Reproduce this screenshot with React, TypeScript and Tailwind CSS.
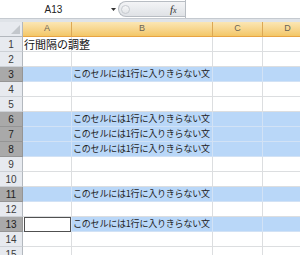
import React from "react";

const SEL = new Set([3, 6, 7, 8, 11, 13]);
const TXT = "このセルには1行に入りきらない文";

function ColHead({ w, label, last }: { w: string; label: string; last?: boolean }) {
  return (
    <div
      className={`${w} shrink-0 h-full flex items-center justify-center border-b border-[#e8a443] ${
        last ? "" : "border-r border-r-[#dca855]"
      } bg-gradient-to-b from-[#fbe6b4] to-[#f3c767] text-[9px] text-[#6a6456]`}
      style={{ fontFamily: '"Liberation Sans", Arial, sans-serif' }}
    >
      {label}
    </div>
  );
}

function Row({ n }: { n: number }) {
  const sel = SEL.has(n);
  const active = n === 13;
  const cellBase = sel
    ? "bg-[#b9d7f8] border-r border-b border-[#d2e2f5]"
    : "bg-white border-r border-b border-[#dcdee0]";
  return (
    <div className="flex h-[15px] shrink-0">
      <div
        className={`w-[23px] shrink-0 h-full flex items-center justify-center text-[10px] border-r border-b ${
          sel
            ? "bg-[#a9a9a9] border-[#959595] text-[#222]"
            : "bg-[#e7eaef] border-r-[#b3b8be] border-b-[#cdd1d6] text-[#3c3c3c]"
        }`}
        style={{ fontFamily: '"Liberation Sans", Arial, sans-serif' }}
      >
        {n}
      </div>
      <div className={`w-[49px] shrink-0 h-full relative ${active ? "bg-white border-r border-b border-[#d2e2f5]" : cellBase}`}>
        {active && (
          <div className="absolute left-[1px] top-[0px] right-0 bottom-[-1px] border-[1.5px] border-[#505050]" />
        )}
        {n === 1 && (
          <div
            className="absolute left-[1px] top-0 h-full flex items-center whitespace-nowrap text-[11px] text-[#111] z-10"
            style={{ fontFamily: '"Noto Sans CJK JP", sans-serif' }}
          >
            行間隔の調整
          </div>
        )}
      </div>
      <div className={`w-[141px] shrink-0 h-full flex items-center ${cellBase}`}>
        {sel && (
          <span
            className="pl-[1px] whitespace-nowrap text-[9px] tracking-[-0.2px] text-[#222]"
            style={{ fontFamily: '"Noto Sans CJK JP", sans-serif' }}
          >
            {TXT}
          </span>
        )}
      </div>
      <div className={`w-[50px] shrink-0 h-full ${cellBase}`} />
      <div className={`w-[49px] shrink-0 h-full ${cellBase}`} />
    </div>
  );
}

export default function App() {
  const rows = Array.from({ length: 15 }, (_, i) => i + 1);
  return (
    <div className="w-[300px] h-[255px] overflow-hidden bg-white flex flex-col">
      {/* formula bar */}
      <div className="flex h-[19px] shrink-0 border-b border-[#c5cad0] bg-white">
        <div className="w-[118px] shrink-0 h-full flex items-center relative">
          <div
            className="w-[107px] text-center text-[10px] text-[#222]"
            style={{ fontFamily: '"Liberation Sans", Arial, sans-serif' }}
          >
            A13
          </div>
          <svg className="absolute left-[111px] top-[8px]" width="5" height="3" viewBox="0 0 5 3">
            <path d="M0 0 L5 0 L2.5 3 Z" fill="#333" />
          </svg>
        </div>
        <div className="w-[67px] shrink-0 h-full flex items-center">
          <div className="relative w-full h-[16px] rounded-l-full border border-r-0 border-[#b8bdc3] bg-gradient-to-b from-[#f3f4f6] to-[#dfe2e6] flex items-center">
            <div className="ml-[2px] w-[9px] h-[9px] rounded-full border border-[#c6cacf] bg-gradient-to-b from-[#f6f7f8] to-[#e3e5e8]" />
            <span
              className="absolute left-[51px] top-[0px] italic text-[11px] leading-[14px] text-[#333]"
              style={{ fontFamily: '"Liberation Serif", "Times New Roman", serif' }}
            >
              f<span className="text-[8px]">x</span>
            </span>
          </div>
        </div>
        <div className="flex-1 h-full bg-white border-l border-[#b8bdc3]" />
      </div>
      <div className="h-[3px] shrink-0 bg-[#dfe3e8]" />
      {/* header row */}
      <div className="flex h-[15px] shrink-0">
        <div className="w-[23px] shrink-0 h-full relative bg-[#e7eaef] border-r border-b border-[#b3b8be]">
          <svg className="absolute right-[2px] bottom-[2px]" width="9" height="9" viewBox="0 0 9 9">
            <path d="M9 0 L9 9 L0 9 Z" fill="#c3c7cc" />
          </svg>
        </div>
        <ColHead w="w-[49px]" label="A" />
        <ColHead w="w-[141px]" label="B" />
        <ColHead w="w-[50px]" label="C" />
        <ColHead w="w-[49px]" label="D" last />
      </div>
      {rows.map((n) => (
        <Row key={n} n={n} />
      ))}
    </div>
  );
}
